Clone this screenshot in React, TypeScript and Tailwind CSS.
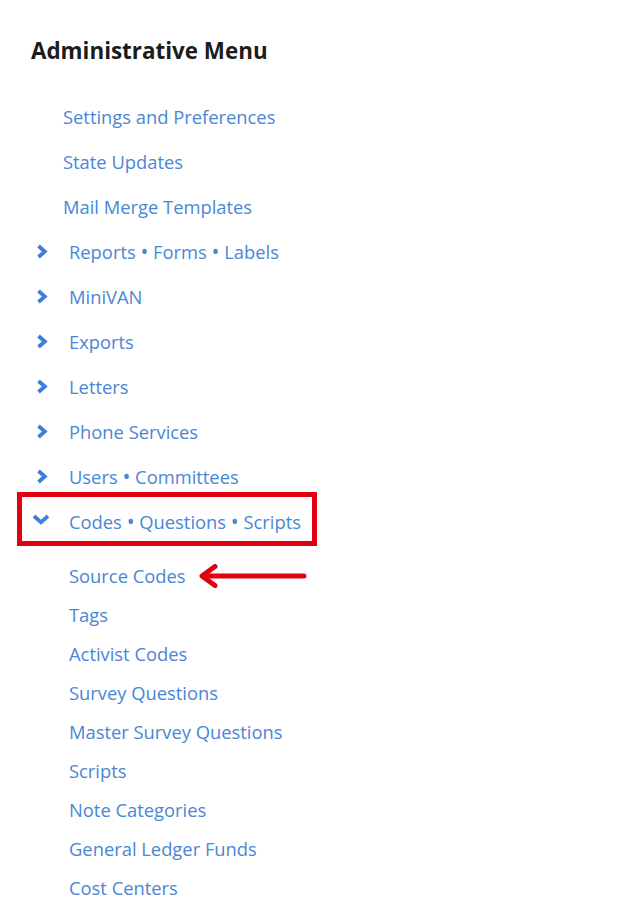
import React from 'react';

const topItems = [
  { label: ['Settings and Preferences'], toggle: false },
  { label: ['State Updates'], toggle: false },
  { label: ['Mail Merge Templates'], toggle: false },
  { label: ['Reports', 'Forms', 'Labels'], toggle: true },
  { label: ['MiniVAN'], toggle: true },
  { label: ['Exports'], toggle: true },
  { label: ['Letters'], toggle: true },
  { label: ['Phone Services'], toggle: true },
  { label: ['Users', 'Committees'], toggle: true },
];

const subItems = [
  'Source Codes',
  'Tags',
  'Activist Codes',
  'Survey Questions',
  'Master Survey Questions',
  'Scripts',
  'Note Categories',
  'General Ledger Funds',
  'Cost Centers',
];

// joins parts with a bullet a bit larger than the text's own
function Label({ parts }: { parts: string[] }) {
  return (
    <span>
      {parts.map((p, i) => (
        <React.Fragment key={p}>
          {i > 0 && (
            <>
              {' '}
              <span className="text-[21px] leading-none">•</span>{' '}
            </>
          )}
          {p}
        </React.Fragment>
      ))}
    </span>
  );
}

function ChevronRight() {
  return (
    <svg width="12" height="15" viewBox="0 0 12 15" className="ml-[5px]">
      <path d="M2.5 2 L8.8 7.5 L2.5 13" fill="none" stroke="#3d7fd9" strokeWidth="3.8" strokeLinejoin="miter" />
    </svg>
  );
}

function ChevronDown() {
  return (
    <svg width="18" height="11" viewBox="0 0 18 11" className="ml-[1px] mt-[-4px]">
      <path d="M2 2 L9 8.3 L16 2" fill="none" stroke="#3d7fd9" strokeWidth="3.8" strokeLinejoin="miter" />
    </svg>
  );
}

export default function App() {
  return (
    <div className="min-h-[915px] bg-white pl-[31px] pt-[36px]" style={{ fontFamily: '"Open Sans", "Noto Sans", sans-serif' }}>
      <h2 className="h-[30px] text-[22.4px] font-bold leading-[30px] text-[#1c1c1c]">Administrative Menu</h2>

      <ul className="mt-[28px]">
        {topItems.map((item) => (
          <li key={item.label.join()} className="flex h-[45px] items-center text-[18.35px] text-[#4a86d6]">
            {item.toggle ? (
              <>
                <span className="flex w-[38px] items-center"><ChevronRight /></span>
                <Label parts={item.label} />
              </>
            ) : (
              <span className="pl-[32px]"><Label parts={item.label} /></span>
            )}
          </li>
        ))}
        <li className="relative flex h-[45px] items-center text-[18.35px] text-[#4a86d6]">
          <span className="flex w-[38px] items-center"><ChevronDown /></span>
          <Label parts={['Codes', 'Questions', 'Scripts']} />
          <span className="pointer-events-none absolute left-[-14px] top-[-7px] h-[54px] w-[300px] border-[5px] border-[#e0000f]" />
        </li>
      </ul>

      <ul className="mt-[12px] pl-[38px]">
        {subItems.map((label, i) => (
          <li key={label} className="relative flex h-[39px] items-center text-[18.35px] text-[#4a86d6]">
            <span>{label}</span>
            {i === 0 && (
              <svg className="absolute left-[129px] top-[8px]" width="110" height="24" viewBox="0 0 110 24">
                <path d="M6 12 H106" stroke="#e0000f" strokeWidth="5" strokeLinecap="round" />
                <path d="M17 2.5 L4 12 L17 21.5" fill="none" stroke="#e0000f" strokeWidth="5" strokeLinecap="round" strokeLinejoin="round" />
              </svg>
            )}
          </li>
        ))}
      </ul>
    </div>
  );
}
